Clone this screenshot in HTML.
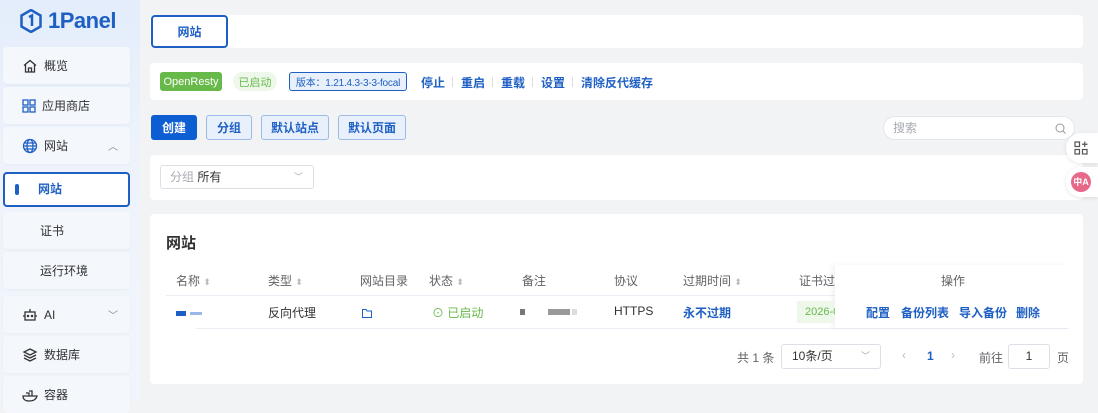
<!DOCTYPE html><html><head><meta charset="utf-8"><style>
*{box-sizing:border-box;margin:0;padding:0}
body{width:1098px;height:401px;overflow:hidden;background:#f2f3f5;font-family:"Liberation Sans","Noto Sans CJK SC",sans-serif;font-size:12px;color:#303133;position:relative}
.abs{position:absolute}
.side{left:0;top:0;width:140px;height:401px;background:linear-gradient(180deg,#e3edfb 0%,#eef3fb 40%,#f1f5fb 100%)}
.mi{position:absolute;left:3px;width:127px;height:37px;background:#f4f7fc;border-radius:4px;display:flex;align-items:center;padding-left:19px;font-size:12px;color:#303133;box-shadow:0 1px 2px rgba(0,0,0,.03)}
.mi svg{margin-right:6px}
.card{background:#fff;border-radius:4px}
.btn{position:absolute;height:25px;border:1px solid #9dbbe6;background:#e8f0fb;color:#1e5fc4;border-radius:3px;font-size:12px;display:flex;align-items:center;justify-content:center;font-weight:bold}
.lk{color:#1e5fc4;font-weight:bold;position:absolute;top:74px}
.th{position:absolute;top:272px;color:#606266}
.td{position:absolute;top:304px}
</style></head><body>
<div class="abs side">
 <div class="abs" style="left:20px;top:8px;display:flex;align-items:center;color:#1e5fc4;font-weight:bold;font-size:22px">
  <svg width="22" height="24" viewBox="0 0 22 24"><path d="M11 1L20.5 6.5V17.5L11 23L1.5 17.5V6.5Z" fill="none" stroke="#1e5fc4" stroke-width="2.5"/><path d="M9 8L12 6.5V17" stroke="#1e5fc4" stroke-width="2.5" fill="none"/></svg>
  <span style="margin-left:6px;letter-spacing:-0.5px">1Panel</span></div>
 <div class="mi" style="top:47px"><svg width="16" height="16" viewBox="0 0 16 16" fill="none" stroke="#333" stroke-width="1.3"><path d="M2 7.5L8 2.5L14 7.5M3.5 6.5V14H12.5V6.5M6.5 14V10H9.5V14"/></svg>概览</div>
 <div class="mi" style="top:87px"><svg width="14" height="14" viewBox="0 0 14 14" fill="none" stroke="#1e5fc4" stroke-width="1.3"><rect x="1" y="1" width="5" height="5"/><rect x="8" y="1" width="5" height="5"/><rect x="1" y="8" width="5" height="5"/><rect x="8" y="8" width="5" height="5"/></svg>应用商店</div>
 <div class="mi" style="top:127px"><svg width="16" height="16" viewBox="0 0 16 16" fill="none" stroke="#1e5fc4" stroke-width="1.3"><circle cx="8" cy="8" r="6.5"/><ellipse cx="8" cy="8" rx="3" ry="6.5"/><path d="M1.5 8H14.5M2.5 5H13.5M2.5 11H13.5"/></svg>网站<span style="position:absolute;left:105px;color:#888;font-size:10px">︿</span></div>
 <div class="abs" style="left:3px;top:172px;width:127px;height:35px;background:#fff;border:2px solid #1e5fc4;border-radius:4px;color:#1e5fc4;font-weight:bold;padding-left:33px;line-height:31px"><span class="abs" style="left:10px;top:10px;width:4px;height:11px;background:#1e5fc4;border-radius:2px"></span>网站</div>
 <div class="mi" style="top:212px;padding-left:37px">证书</div>
 <div class="mi" style="top:252px;padding-left:37px">运行环境</div>
 <div class="mi" style="top:296px"><svg width="16" height="16" viewBox="0 0 16 16" fill="none" stroke="#333" stroke-width="1.3"><rect x="3" y="5" width="10" height="8"/><path d="M8 2V5M1 9H3M13 9H15"/><circle cx="6" cy="9" r=".6" fill="#333"/><circle cx="10" cy="9" r=".6" fill="#333"/></svg>AI<span style="position:absolute;left:105px;color:#888;font-size:10px">﹀</span></div>
 <div class="mi" style="top:336px"><svg width="16" height="16" viewBox="0 0 16 16" fill="none" stroke="#333" stroke-width="1.3"><path d="M8 2L14 5L8 8L2 5Z M2 8L8 11L14 8 M2 11L8 14L14 11"/></svg>数据库</div>
 <div class="mi" style="top:376px"><svg width="16" height="14" viewBox="0 0 16 14" fill="none" stroke="#333" stroke-width="1.3"><path d="M1 8H15C14 12 10 13 7 13C3 13 1 11 1 8ZM4 5H7V8M7 3H10V8"/></svg>容器</div>
</div>

<div class="abs card" style="left:150px;top:15px;width:933px;height:33px"></div>
<div class="abs" style="left:151px;top:15px;width:77px;height:33px;border:2px solid #1e5fc4;border-radius:4px;background:#fff;color:#1e5fc4;font-weight:bold;display:flex;align-items:center;justify-content:center">网站</div>

<div class="abs card" style="left:150px;top:63px;width:933px;height:37px"></div>
<div class="abs" style="left:160px;top:72px;width:62px;height:19px;background:#67b94a;color:#fff;border-radius:3px;font-size:11px;display:flex;align-items:center;justify-content:center">OpenResty</div>
<div class="abs" style="left:233px;top:72px;width:44px;height:19px;background:#eef8ea;color:#67b94a;border-radius:10px;font-size:11px;display:flex;align-items:center;justify-content:center">已启动</div>
<div class="abs" style="left:289px;top:72px;width:118px;height:19px;background:#e8f0fb;border:1px solid #1e5fc4;color:#1e5fc4;border-radius:3px;font-size:10px;display:flex;align-items:center;justify-content:center;white-space:nowrap;letter-spacing:-0.2px">版本：1.21.4.3-3-3-focal</div>
<span class="lk" style="left:421px">停止</span><span class="lk" style="left:461px">重启</span><span class="lk" style="left:501px">重载</span><span class="lk" style="left:541px">设置</span><span class="lk" style="left:581px">清除反代缓存</span>
<span class="abs" style="left:452px;top:77px;width:1px;height:10px;background:#ddd"></span><span class="abs" style="left:492px;top:77px;width:1px;height:10px;background:#ddd"></span><span class="abs" style="left:532px;top:77px;width:1px;height:10px;background:#ddd"></span><span class="abs" style="left:572px;top:77px;width:1px;height:10px;background:#ddd"></span>

<div class="btn" style="left:151px;top:115px;width:46px;background:#0d5dd3;border-color:#0d5dd3;color:#fff">创建</div>
<div class="btn" style="left:206px;top:115px;width:46px">分组</div>
<div class="btn" style="left:261px;top:115px;width:68px">默认站点</div>
<div class="btn" style="left:338px;top:115px;width:68px">默认页面</div>
<div class="abs" style="left:883px;top:116px;width:192px;height:24px;background:#fff;border:1px solid #e4e7ed;border-radius:12px;color:#a8abb2;padding-left:9px;line-height:22px">搜索<svg class="abs" style="right:8px;top:6px" width="11" height="11" viewBox="0 0 11 11" fill="none" stroke="#999"><circle cx="5" cy="5" r="4"/><path d="M8 8L10.5 10.5"/></svg></div>

<div class="abs card" style="left:150px;top:155px;width:933px;height:45px"></div>
<div class="abs" style="left:160px;top:165px;width:154px;height:24px;border:1px solid #dcdfe6;border-radius:3px;line-height:22px;padding-left:9px;color:#303133"><span style="color:#a8abb2">分组</span> 所有<span class="abs" style="right:10px;top:0;color:#aaa;font-size:9px">﹀</span></div>

<div class="abs" style="z-index:5;left:1066px;top:133px;width:32px;height:30px;background:#fff;border-radius:15px 0 0 15px;box-shadow:0 1px 4px rgba(0,0,0,.1)"><svg class="abs" style="left:8px;top:8px" width="14" height="14" viewBox="0 0 14 14" fill="none" stroke="#555" stroke-width="1.2"><rect x="1" y="1" width="4.5" height="4.5"/><rect x="1" y="8.5" width="4.5" height="4.5"/><rect x="8.5" y="8.5" width="4.5" height="4.5"/><path d="M10.75 0.5V6M8 3.25H13.5"/></svg></div>
<div class="abs" style="z-index:5;left:1066px;top:167px;width:32px;height:30px;background:#fff;border-radius:15px 0 0 15px;box-shadow:0 1px 4px rgba(0,0,0,.1)"><div class="abs" style="left:5px;top:5px;width:20px;height:20px;border-radius:10px;background:#e8688a;color:#fff;font-size:9px;font-weight:bold;text-align:center;line-height:20px">中A</div></div>

<div class="abs card" style="left:150px;top:214px;width:933px;height:170px"></div>
<div class="abs" style="left:166px;top:232px;font-size:15px;font-weight:bold">网站</div>
<div class="abs" style="left:166px;top:295px;width:903px;height:1px;background:#ebeef5"></div>
<div class="abs" style="left:196px;top:328px;width:873px;height:1px;background:#ebeef5"></div>
<div class="abs" style="left:835px;top:265px;width:234px;height:63px;background:#fff;box-shadow:-3px 0 5px rgba(0,0,0,.05)"></div>
<span class="th" style="left:176px">名称 <span style="color:#bbb;font-size:9px">⬍</span></span>
<span class="th" style="left:268px">类型 <span style="color:#bbb;font-size:9px">⬍</span></span>
<span class="th" style="left:360px">网站目录</span>
<span class="th" style="left:429px">状态 <span style="color:#bbb;font-size:9px">⬍</span></span>
<span class="th" style="left:522px">备注</span>
<span class="th" style="left:614px">协议</span>
<span class="th" style="left:683px">过期时间 <span style="color:#bbb;font-size:9px">⬍</span></span>
<span class="th" style="left:799px;width:36px;overflow:hidden;white-space:nowrap">证书过期</span>
<span class="th" style="left:941px">操作</span>
<div class="abs" style="left:176px;top:311px;width:10px;height:5px;background:#1e5fc4"></div><div class="abs" style="left:190px;top:312px;width:12px;height:3px;background:#9ab8e6"></div>
<span class="td" style="left:268px">反向代理</span>
<svg class="abs" style="left:362px;top:309px" width="10" height="9" viewBox="0 0 10 9" fill="none" stroke="#1e5fc4"><path d="M.5 .5H4L5 2H9.5V8.5H.5Z"/></svg>
<span class="td" style="left:432px;color:#67b94a">⊙ 已启动</span>
<div class="abs" style="left:520px;top:309px;width:5px;height:6px;background:#777"></div><div class="abs" style="left:548px;top:309px;width:22px;height:6px;background:#999"></div><div class="abs" style="left:572px;top:309px;width:5px;height:6px;background:#ddd"></div>
<span class="td" style="left:614px">HTTPS</span>
<span class="td" style="left:683px;color:#1e5fc4;font-weight:bold">永不过期</span>
<div class="abs" style="left:797px;top:301px;width:38px;height:22px;background:#eef8ea;color:#67b94a;font-size:11px;line-height:22px;padding-left:8px;overflow:hidden;white-space:nowrap">2026-0</div>
<span class="td" style="left:866px;color:#1e5fc4;font-weight:bold">配置</span>
<span class="td" style="left:901px;color:#1e5fc4;font-weight:bold">备份列表</span>
<span class="td" style="left:959px;color:#1e5fc4;font-weight:bold">导入备份</span>
<span class="td" style="left:1016px;color:#1e5fc4;font-weight:bold">删除</span>
<span class="abs" style="left:737px;top:349px;color:#606266">共 1 条</span>
<div class="abs" style="left:781px;top:344px;width:100px;height:25px;border:1px solid #dcdfe6;border-radius:3px;line-height:23px;padding-left:10px">10条/页<span class="abs" style="right:10px;color:#aaa;font-size:9px">﹀</span></div>
<span class="abs" style="left:902px;top:348px;color:#bbb">‹</span>
<span class="abs" style="left:927px;top:349px;color:#1e5fc4;font-weight:bold">1</span>
<span class="abs" style="left:951px;top:348px;color:#bbb">›</span>
<span class="abs" style="left:979px;top:349px;color:#606266">前往</span>
<div class="abs" style="left:1008px;top:344px;width:42px;height:25px;border:1px solid #dcdfe6;border-radius:3px;text-align:center;line-height:23px">1</div>
<span class="abs" style="left:1057px;top:349px;color:#606266">页</span>
</body></html>
